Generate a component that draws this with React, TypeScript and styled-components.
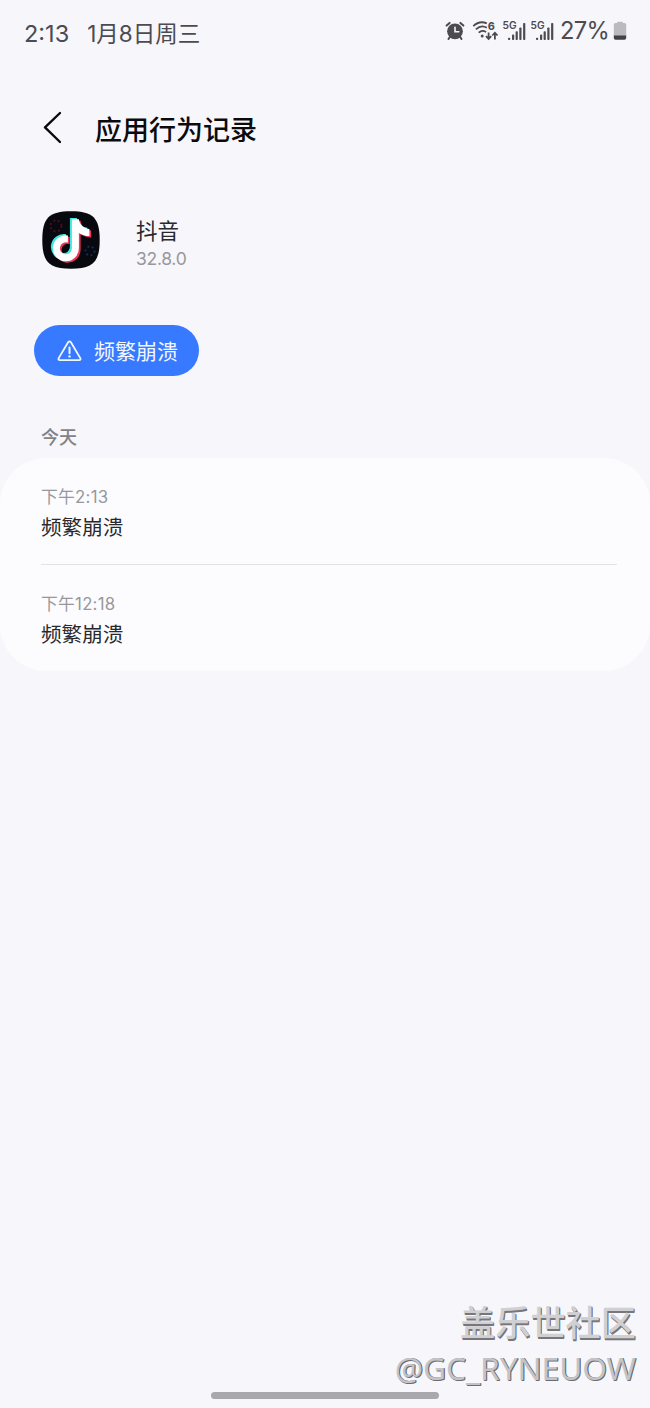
import React from "react";
import styled, { createGlobalStyle } from "styled-components";

const Global = createGlobalStyle`
  * { box-sizing: border-box; }
  body { margin: 0; background: #f6f6fb; font-family: Inter, "Noto Sans CJK SC", sans-serif; }
`;

const Screen = styled.div`
  position: relative;
  width: 650px;
  height: 1408px;
  overflow: hidden;
  background: #f6f6fb;
  display: flex;
  flex-direction: column;
`;

const StatusBar = styled.header`
  height: 68px;
  padding: 0 23px 0 24px;
  display: flex;
  justify-content: space-between;
  color: #4b4b50;
`;

const StatusTime = styled.div`
  display: flex;
  gap: 18px;
  height: 68px;
  align-items: center;
  font-size: 22.5px;
  line-height: 30px;
  white-space: nowrap;
`;

const Clock = styled.span`
  font-size: 23.5px;
`;

const StatusIcons = styled.div`
  display: flex;
  height: 62px;
  align-items: center;
`;

const Percent = styled.span`
  width: 50px;
  margin-left: 6px;
  margin-right: 3px;
  font-size: 23.7px;
  line-height: 30px;
  letter-spacing: -0.7px;
  white-space: nowrap;
`;

const TitleBar = styled.div`
  height: 120px;
  padding-left: 43px;
  display: flex;
  align-items: center;
  gap: 34px;
`;

const Title = styled.h1`
  margin: 0;
  padding-top: 5px;
  font-size: 27px;
  font-weight: 500;
  line-height: 40px;
  color: #0b0b0e;
`;

const AppInfo = styled.section`
  margin-top: 23px;
  height: 58px;
  padding-left: 42px;
  display: flex;
  align-items: center;
  gap: 36px;
`;

const AppText = styled.div`
  display: flex;
  flex-direction: column;
  padding-top: 6px;
`;

const AppName = styled.div`
  font-size: 21.5px;
  line-height: 30px;
  color: #29292d;
`;

const Version = styled.div`
  font-size: 17.5px;
  line-height: 25px;
  letter-spacing: -0.3px;
  color: #97979c;
`;

const Chip = styled.button`
  margin: 56px 0 0 34px;
  width: 165px;
  height: 51px;
  padding: 0 0 0 23px;
  border: 0;
  border-radius: 26px;
  background: #387aff;
  color: #f2f7ff;
  display: flex;
  align-items: center;
  gap: 12px;
  font-family: inherit;
  font-size: 21px;
  line-height: 30px;
  white-space: nowrap;
`;

const ChipLabel = styled.span`
  padding-top: 2px;
`;

const DayLabel = styled.h2`
  margin: 49px 0 0 41px;
  font-size: 18px;
  font-weight: 500;
  line-height: 26px;
  color: #828287;
`;

const Card = styled.section`
  margin-top: 7px;
  height: 213px;
  padding: 0 33px 0 41px;
  border-radius: 46px;
  background: #fcfcff;
`;

const Entry = styled.article`
  height: 106px;
  padding-top: 26px;
  & + & {
    height: 107px;
    border-top: 1px solid #e2e2e6;
  }
`;

const EntryTime = styled.div`
  font-size: 16.8px;
  line-height: 26px;
  letter-spacing: 0.25px;
  color: #97979c;
`;

const EntryName = styled.div`
  margin-top: 3px;
  font-size: 20.6px;
  line-height: 30px;
  color: #29292d;
`;

const Watermark = styled.div`
  position: absolute;
  right: 14px;
  bottom: 19px;
  display: flex;
  flex-direction: column;
  align-items: flex-end;
  color: #d0d0d3;
  text-shadow: 1px 1px 0 #77777b, 1px 2px 0 #77777b;
  white-space: nowrap;
`;

const Community = styled.div`
  font-size: 35.2px;
  line-height: 48px;
  font-weight: 500;
`;

const Author = styled.div`
  font-family: "Noto Sans", sans-serif;
  font-size: 31.6px;
  line-height: 42px;
  color: #c4c4c8;
  text-shadow: 1px 0 0 #6c6c71, 1px 1px 0 #6c6c71;
`;

const HomeBar = styled.div`
  position: absolute;
  left: 211px;
  bottom: 9px;
  width: 228px;
  height: 7px;
  border-radius: 4px;
  background: #a8a8ad;
`;

const Icon = styled.svg<{ $left?: number }>`
  display: block;
  flex: none;
  margin-left: ${(p) => p.$left ?? 0}px;
`;

const Alarm = () => (
  <Icon width="20" height="20" viewBox="0 0 20 20" fill="none" stroke="#4b4b50" strokeLinecap="round">
    <circle cx="10" cy="10.3" r="7.9" fill="#4b4b50" stroke="none" />
    <path d="M1.6 4.6 4.6 1.9M18.4 4.6 15.4 1.9M4.8 16l-1.3 2M15.2 16l1.3 2" strokeWidth="2" />
    <path d="M10 6.2v4.6h3.8" stroke="#f6f6fb" strokeWidth="1.6" />
  </Icon>
);

const Wifi = () => (
  <Icon $left={7} width="27" height="22" viewBox="0 0 27 22" fill="none" stroke="#4b4b50" strokeWidth="1.8">
    <path d="M1.3 6.1C5.3 2.3 10.5 1.5 14.8 3.4M3.9 9.4C7.4 6.1 11.5 5.8 14.8 7.8M6.7 12.6c2.3-2 5.2-2.1 7.3-.5" />
    <circle cx="10.2" cy="16" r="1.5" fill="#4b4b50" stroke="none" />
    <path d="M16.6 12.5v6.4M14 16.1l2.6 2.8 2.6-2.8M22.9 19.5V13M20.3 15.5l2.6-2.8 2.6 2.8" />
    <text x="15.8" y="9.8" fontFamily="Inter, sans-serif" fontSize="11" fontWeight="700" fill="#4b4b50" stroke="none">6</text>
  </Icon>
);

const Signal = ({ left }: { left: number }) => (
  <Icon $left={left} width="23" height="22" viewBox="0 0 23 22" fill="#4b4b50">
    <text x="-.5" y="8.9" fontFamily="Inter, sans-serif" fontSize="10.2" fontWeight="600">5G</text>
    <rect x="5" y="17.8" width="2.2" height="2.2" rx=".8" />
    <rect x="9" y="14.5" width="2.2" height="5.5" rx=".8" />
    <rect x="12.6" y="11.2" width="2.2" height="8.8" rx=".8" />
    <rect x="16.3" y="7.5" width="2.2" height="12.5" rx=".8" />
    <rect x="20.1" y="3" width="2.2" height="17" rx=".8" />
  </Icon>
);

const Battery = () => (
  <Icon width="14" height="20" viewBox="0 0 14 20">
    <path d="M4 2Q4 .8 5.2.8h3.6Q10 .8 10 2h1.5Q13.2 2 13.2 3.8V15H.8V3.8Q.8 2 2.5 2Z" fill="#bababf" />
    <path d="M.8 14.5h12.4V17q0 1.8-1.8 1.8H2.6Q.8 18.8.8 17Z" fill="#414146" />
  </Icon>
);

const Back = () => (
  <Icon width="18" height="34" viewBox="0 0 18 34" fill="none" stroke="#0b0b0e" strokeWidth="2.4" strokeLinecap="round" strokeLinejoin="round">
    <path d="M17 2 2 16.3 17 31" />
  </Icon>
);

const notePath =
  "M29.5 8h7c.8 5.5 4.5 9 10.5 9.8v7c-4.2-.2-7.5-1.3-10.5-3.2V37A13 13 0 1 1 25.5 24.1V31.3A6 6 0 1 0 29.5 37Z";

const AppLogo = () => (
  <Icon width="58" height="58" viewBox="0 0 58 58">
    <path d="M29 .3c22 0 28.7 6.7 28.7 28.7S51 57.7 29 57.7.3 51 .3 29 7 .3 29 .3Z" fill="#08080f" />
    <g fill="none" strokeWidth="2" strokeDasharray="2 2.5">
      <circle cx="14" cy="15" r="5.5" stroke="#42101e" />
      <circle cx="48" cy="40" r="4.5" stroke="#142950" />
    </g>
    <path d={notePath} fill="#f0345d" transform="translate(2.1 1.7)" />
    <path d={notePath} fill="#3fe8df" transform="translate(-1.6 -1)" />
    <path d={notePath} fill="#fff" transform="translate(.4 .3)" />
  </Icon>
);

const Warning = () => (
  <Icon width="25" height="22" viewBox="0 0 25 22" fill="none" stroke="#f2f7ff" strokeWidth="1.8" strokeLinejoin="round" strokeLinecap="round">
    <path d="M11.1 2.3 1.7 18.1q-.9 2 1.2 2h19.2q2.1 0 1.2-2L13.9 2.3q-1.4-2-2.8 0Z" />
    <path d="M12.5 7.6v5.6" strokeWidth="2" />
    <circle cx="12.5" cy="16.4" r="1.2" fill="#f2f7ff" stroke="none" />
  </Icon>
);

const entries = [
  { time: "下午2:13", name: "频繁崩溃" },
  { time: "下午12:18", name: "频繁崩溃" },
];

export default function App() {
  return (
    <Screen>
      <Global />
      <StatusBar>
        <StatusTime>
          <Clock>2:13</Clock>
          <span>1月8日周三</span>
        </StatusTime>
        <StatusIcons>
          <Alarm />
          <Wifi />
          <Signal left={4} />
          <Signal left={5} />
          <Percent>27%</Percent>
          <Battery />
        </StatusIcons>
      </StatusBar>
      <TitleBar>
        <Back />
        <Title>应用行为记录</Title>
      </TitleBar>
      <AppInfo>
        <AppLogo />
        <AppText>
          <AppName>抖音</AppName>
          <Version>32.8.0</Version>
        </AppText>
      </AppInfo>
      <Chip>
        <Warning />
        <ChipLabel>频繁崩溃</ChipLabel>
      </Chip>
      <DayLabel>今天</DayLabel>
      <Card>
        {entries.map((e) => (
          <Entry key={e.time}>
            <EntryTime>{e.time}</EntryTime>
            <EntryName>{e.name}</EntryName>
          </Entry>
        ))}
      </Card>
      <Watermark>
        <Community>盖乐世社区</Community>
        <Author>@GC_RYNEUOW</Author>
      </Watermark>
      <HomeBar />
    </Screen>
  );
}
